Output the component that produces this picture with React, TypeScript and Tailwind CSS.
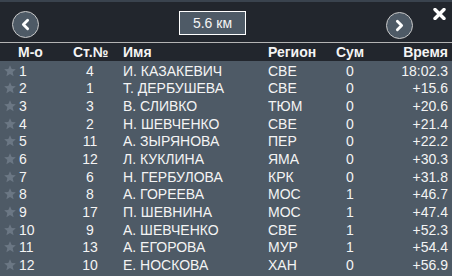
import { ChevronLeft, ChevronRight } from "lucide-react";

const rows = [
  { pos: 1, num: 4, name: "И. КАЗАКЕВИЧ", reg: "СВЕ", sum: 0, time: "18:02.3" },
  { pos: 2, num: 1, name: "Т. ДЕРБУШЕВА", reg: "СВЕ", sum: 0, time: "+15.6" },
  { pos: 3, num: 3, name: "В. СЛИВКО", reg: "ТЮМ", sum: 0, time: "+20.6" },
  { pos: 4, num: 2, name: "Н. ШЕВЧЕНКО", reg: "СВЕ", sum: 0, time: "+21.4" },
  { pos: 5, num: 11, name: "А. ЗЫРЯНОВА", reg: "ПЕР", sum: 0, time: "+22.2" },
  { pos: 6, num: 12, name: "Л. КУКЛИНА", reg: "ЯМА", sum: 0, time: "+30.3" },
  { pos: 7, num: 6, name: "Н. ГЕРБУЛОВА", reg: "КРК", sum: 0, time: "+31.8" },
  { pos: 8, num: 8, name: "А. ГОРЕЕВА", reg: "МОС", sum: 1, time: "+46.7" },
  { pos: 9, num: 17, name: "П. ШЕВНИНА", reg: "МОС", sum: 1, time: "+47.4" },
  { pos: 10, num: 9, name: "А. ШЕВЧЕНКО", reg: "СВЕ", sum: 1, time: "+52.3" },
  { pos: 11, num: 13, name: "А. ЕГОРОВА", reg: "МУР", sum: 1, time: "+54.4" },
  { pos: 12, num: 10, name: "Е. НОСКОВА", reg: "ХАН", sum: 0, time: "+56.9" },
];

function Star() {
  return (
    <svg width="14" height="14" viewBox="0 0 24 24" className="shrink-0">
      <path
        d="M12 2l2.9 6.6 7.1.6-5.4 4.7 1.6 7-6.2-3.7-6.2 3.7 1.6-7L2 9.2l7.1-.6z"
        fill="#6b7784"
      />
    </svg>
  );
}

export default function App() {
  return (
    <div
      className="h-[276px] w-[452px] overflow-hidden bg-[#4e5a66] text-[14px] text-[#f4f4f4]"
      style={{ fontFamily: '"Liberation Sans", Arial, sans-serif' }}
    >
      <div className="h-[2px] bg-[#3a434e]" />
      <div className="relative flex h-[40px] items-start bg-[#22262d]">
        <button className="ml-[12px] mt-[9px] flex h-[27px] w-[27px] items-center justify-center rounded-full border border-[#c8c8c8] bg-[#4e5a66]">
          <ChevronLeft size={17} strokeWidth={4} color="#fff" />
        </button>
        <div className="ml-[140px] mt-[9px] flex h-[24px] w-[67px] items-center justify-center border border-white bg-[#4e5a66] text-[14px]">
          5.6 км
        </div>
        <button className="ml-[140px] mt-[10px] flex h-[27px] w-[27px] items-center justify-center rounded-full border border-[#c8c8c8] bg-[#4e5a66]">
          <ChevronRight size={17} strokeWidth={4} color="#fff" />
        </button>
        <svg width="13" height="12" viewBox="0 0 13 12" className="absolute left-[433px] top-[6px]">
          <path d="M2 1.5l9 9M11 1.5l-9 9" stroke="#fff" strokeWidth="3.4" strokeLinecap="round" />
        </svg>
      </div>
      <div className="h-px bg-[#b4b4b4]" />
      <div className="flex h-[18px] items-center bg-[#22262d] text-[14px] font-bold">
        <div className="w-[66px] pl-[18px]">М-о</div>
        <div className="w-[57px] pl-[7px]">Ст.№</div>
        <div className="w-[145px]">Имя</div>
        <div className="w-[68px]">Регион</div>
        <div className="w-[40px]">Сум</div>
        <div className="flex-1 pr-[4px] text-right">Время</div>
      </div>
      {rows.map((r) => (
        <div key={r.pos} className="flex h-[17.65px] items-center pt-[2px] leading-none">
          <div className="flex w-[66px] items-center gap-[2px] pl-[3px]">
            <Star />
            <span>{r.pos}</span>
          </div>
          <div className="w-[48px] text-center">{r.num}</div>
          <div className="w-[154px] pl-[9px]">{r.name}</div>
          <div className="w-[68px]">{r.reg}</div>
          <div className="w-[28px] text-center">{r.sum}</div>
          <div className="flex-1 pr-[4px] text-right">{r.time}</div>
        </div>
      ))}
    </div>
  );
}
